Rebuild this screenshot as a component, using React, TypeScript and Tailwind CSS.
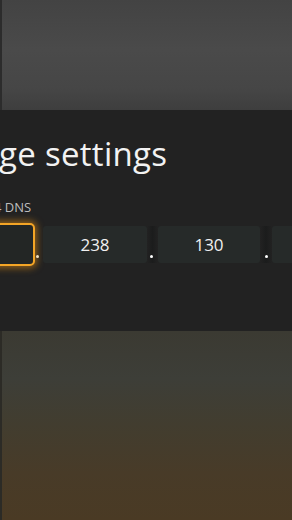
import React from "react";

export default function App() {
  const font = { fontFamily: '"Open Sans", "Noto Sans", sans-serif' };
  return (
    <div className="w-[292px] h-[520px] overflow-hidden flex flex-col bg-[#222222]" style={font}>
      <div className="h-[110px] shrink-0 border-l-2 border-[#2c2c2c] bg-[linear-gradient(180deg,#434343_0%,#4a4a4a_45%,#464646_80%,#3e3e3e_100%)]" />
      <div className="h-[221px] shrink-0 bg-[#222222] flex flex-col">
        <div className="mt-[23px] ml-[-1px] text-[33px] leading-[42px] text-[#f2f2f2] whitespace-nowrap tracking-[0.3px]">
          ge settings
        </div>
        <div className="mt-[24px] ml-[-6px] text-[13px] leading-[17px] text-[#bdbdbd] whitespace-nowrap">
          4 DNS
        </div>
        <div className="mt-[7px] h-[43px] flex items-center whitespace-nowrap">
          <div className="shrink-0 ml-[-75px] w-[110px] h-[43px] rounded-[5px] border-2 border-[#f4a526] bg-[#232625] shadow-[0_0_7px_2px_rgba(240,150,20,0.55)]" />
          <div className="shrink-0 w-[8px] h-[37px] flex items-end pb-[5px] pl-[1px]">
            <div className="w-[3px] h-[3px] rounded-full bg-[#f4e2c0]" />
          </div>
          <div className="shrink-0 w-[104px] h-[37px] rounded-[3px] bg-[#262a29] flex items-center justify-center text-[17px] text-[#f0f0f0]">
            238
          </div>
          <div className="shrink-0 w-[11px] h-[37px] flex items-end pb-[5px] pl-[3px] bg-[linear-gradient(90deg,#222222,#1b1c1c_50%,#222222)]">
            <div className="w-[3px] h-[3px] rounded-full bg-white" />
          </div>
          <div className="shrink-0 w-[102px] h-[37px] rounded-[3px] bg-[#262a29] flex items-center justify-center text-[17px] text-[#f0f0f0]">
            130
          </div>
          <div className="shrink-0 w-[12px] h-[37px] flex items-end pb-[5px] pl-[5px] bg-[linear-gradient(90deg,#222222,#1b1c1c_50%,#222222)]">
            <div className="w-[3px] h-[3px] rounded-full bg-white" />
          </div>
          <div className="shrink-0 w-[104px] h-[37px] rounded-[3px] bg-[#262a29]" />
        </div>
      </div>
      <div className="flex-1 border-l-2 border-[#2c2b26] bg-[linear-gradient(180deg,#3b3a32_0%,#3d3e38_25%,#423d2f_50%,#483b28_75%,#4a3a24_100%)]" />
    </div>
  );
}
